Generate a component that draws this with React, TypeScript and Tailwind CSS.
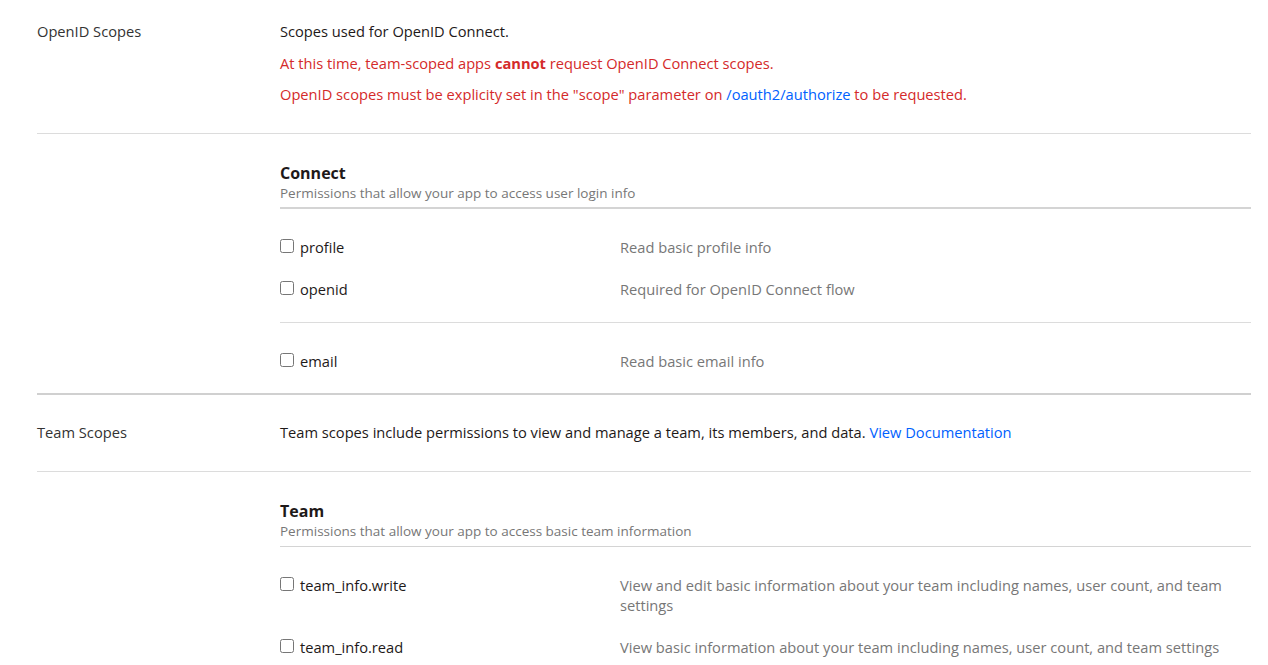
const SANS = "font-['Open_Sans','Liberation_Sans',sans-serif]";

type Scope = { name: string; desc: string };

function ScopeRow({ scope }: { scope: Scope }) {
  return (
    <div className="flex py-[11px] text-[14.67px] leading-[20px]">
      <label className="flex w-[340px] shrink-0 items-start text-[#1e1919]">
        <input type="checkbox" className="mt-[2px] mr-[6px] h-[14px] w-[14px] shrink-0" />
        <span>{scope.name}</span>
      </label>
      <div className="flex-1 pr-[20px] text-[#777]">{scope.desc}</div>
    </div>
  );
}

function GroupHeader({ title, subtitle, thick }: { title: string; subtitle: string; thick?: boolean }) {
  return (
    <div className={thick ? 'border-b-2 border-[#d4d4d4] pb-[5px]' : 'border-b border-[#d4d4d4] pb-[6px]'}>
      <div className="text-[16px] font-bold leading-[22px] text-[#1e1919]">{title}</div>
      <div className="text-[13.5px] leading-[18px] text-[#777]">{subtitle}</div>
    </div>
  );
}

export default function App() {
  return (
    <div className={`${SANS} min-h-screen bg-white pl-[37px] pr-[17px]`}>
      {/* OpenID Scopes */}
      <div className="flex border-b border-[#dcdcdc] pt-[21px] pb-[29px] text-[14.67px] leading-[20px]">
        <div className="w-[243px] shrink-0 text-[#333]">OpenID Scopes</div>
        <div className="flex flex-col gap-[11.5px]">
          <p className="text-[#1e1919]">Scopes used for OpenID Connect.</p>
          <p className="text-[#d42a2a]">
            At this time, team-scoped apps <b>cannot</b> request OpenID Connect scopes.
          </p>
          <p className="text-[#d42a2a]">
            OpenID scopes must be explicity set in the "scope" parameter on{' '}
            <a className="text-[#0061fe]">/oauth2/authorize</a> to be requested.
          </p>
        </div>
      </div>

      {/* Connect group */}
      <div className="border-b-2 border-[#d0d0d0]">
        <div className="ml-[243px] pt-[28px]">
          <GroupHeader thick title="Connect" subtitle="Permissions that allow your app to access user login info" />
          <div className="pt-[17px]">
            <ScopeRow scope={{ name: 'profile', desc: 'Read basic profile info' }} />
            <ScopeRow scope={{ name: 'openid', desc: 'Required for OpenID Connect flow' }} />
          </div>
          <div className="mt-[12px] border-t border-[#dcdcdc] pt-[17px] pb-[11px]">
            <ScopeRow scope={{ name: 'email', desc: 'Read basic email info' }} />
          </div>
        </div>
      </div>

      {/* Team Scopes */}
      <div className="flex border-b border-[#dcdcdc] pt-[27px] pb-[29px] text-[14.67px] leading-[20px]">
        <div className="w-[243px] shrink-0 text-[#333]">Team Scopes</div>
        <div className="text-[#1e1919]">
          Team scopes include permissions to view and manage a team, its members, and data.{' '}
          <a className="text-[#0061fe]">View Documentation</a>
        </div>
      </div>

      <div className="ml-[243px] pt-[28px]">
        <GroupHeader title="Team" subtitle="Permissions that allow your app to access basic team information" />
        <div className="pt-[17px]">
          <ScopeRow
            scope={{
              name: 'team_info.write',
              desc: 'View and edit basic information about your team including names, user count, and team settings',
            }}
          />
          <ScopeRow
            scope={{
              name: 'team_info.read',
              desc: 'View basic information about your team including names, user count, and team settings',
            }}
          />
        </div>
      </div>
    </div>
  );
}
